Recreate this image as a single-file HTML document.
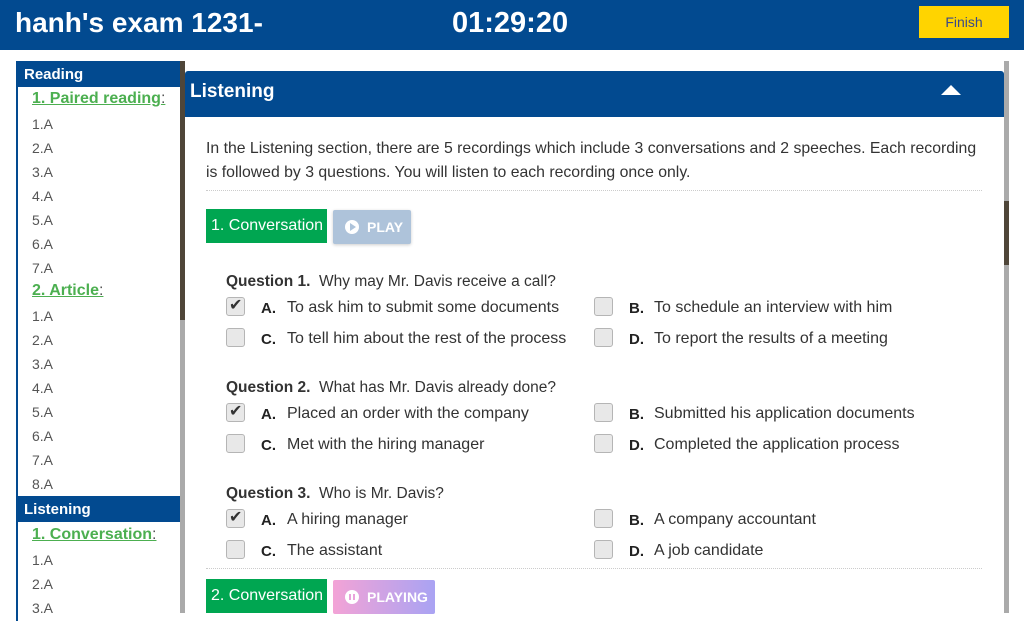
<!DOCTYPE html>
<html><head><meta charset="utf-8"><style>
*{margin:0;padding:0;box-sizing:border-box}
body{width:1024px;height:613px;overflow:hidden;background:#fff;font-family:"Liberation Sans",sans-serif;color:#333;position:relative}
.a{position:absolute;white-space:nowrap}
.top{left:0;top:0;width:1024px;height:50px;background:#024a90}
.side{left:16px;top:61px;width:165px;height:560px;border-left:2px solid #024a90;background:#fff}
.sh{position:absolute;left:0;width:163px;height:26px;background:#024a90;color:#fff;font-weight:bold;font-size:15px;padding:5px 0 0 6px}
.si{position:absolute;left:14px;font-size:14px;color:#555}
.sg{position:absolute;left:14px;font-size:16px;color:#4caf50;font-weight:bold;text-decoration:underline}
.cb{position:absolute;width:19px;height:19px;border:1px solid #b5b5b5;border-radius:3px;background:#e8e8e8}
.lt{position:absolute;font-size:15px;font-weight:bold;color:#222}
.tx{position:absolute;font-size:16px;color:#333;white-space:nowrap}
.q{position:absolute;left:226px;font-size:15.5px;color:#333;white-space:nowrap}
.conv{position:absolute;left:206px;height:34px;width:121px;background:#00a651;color:#fff;font-size:16px;padding:8px 0 0 5px}
.hr{position:absolute;left:206px;width:776px;border-top:1px dotted #ccc}
</style></head><body>
<div class="a top"></div>
<div class="a" style="left:15px;top:7px;color:#fff;font-size:28px;font-weight:bold">hanh's exam 1231-</div>
<div class="a" style="left:452px;top:7px;color:#fff;font-size:29px;font-weight:bold">01:29:20</div>
<div class="a" style="left:919px;top:6px;width:90px;height:32px;background:#ffd400;color:#3b4a8a;font-size:14px;text-align:center;padding-top:8px">Finish</div>

<div class="a side">
<div class="sh" style="top:0">Reading</div>
<div class="sg" style="top:29px">1. Paired reading<span style="color:#555;font-weight:normal;text-decoration:none">:</span></div>
<div class="si" style="top:55px">1.A</div><div class="si" style="top:79px">2.A</div><div class="si" style="top:103px">3.A</div><div class="si" style="top:127px">4.A</div><div class="si" style="top:151px">5.A</div><div class="si" style="top:175px">6.A</div><div class="si" style="top:199px">7.A</div>
<div class="sg" style="top:221px">2. Article<span style="color:#555;font-weight:normal;text-decoration:none">:</span></div>
<div class="si" style="top:247px">1.A</div><div class="si" style="top:271px">2.A</div><div class="si" style="top:295px">3.A</div><div class="si" style="top:319px">4.A</div><div class="si" style="top:343px">5.A</div><div class="si" style="top:367px">6.A</div><div class="si" style="top:391px">7.A</div><div class="si" style="top:415px">8.A</div>
<div class="sh" style="top:435px">Listening</div>
<div class="sg" style="top:465px">1. Conversation<span style="color:#555;font-weight:normal;text-decoration:none">:</span></div>
<div class="si" style="top:491px">1.A</div><div class="si" style="top:515px">2.A</div><div class="si" style="top:539px">3.A</div>
</div>
<div class="a" style="left:180px;top:61px;width:5px;height:552px;background:#aaa"></div>
<div class="a" style="left:180px;top:61px;width:5px;height:259px;background:#4f4639"></div>
<div class="a" style="left:1004px;top:61px;width:5px;height:552px;background:#aaa"></div>
<div class="a" style="left:1004px;top:201px;width:5px;height:64px;background:#4f4639"></div>

<div class="a" style="left:185px;top:71px;width:819px;height:46px;background:#024a90;border-radius:3px 3px 0 0"></div>
<div class="a" style="left:190px;top:81px;color:#fff;font-size:19px;font-weight:bold">Listening</div>
<div class="a" style="left:941px;top:85px;width:0;height:0;border-left:10px solid transparent;border-right:10px solid transparent;border-bottom:10px solid #fff"></div>

<div class="a" style="left:206px;top:137px;font-size:15.8px;line-height:24px;color:#333">In the Listening section, there are 5 recordings which include 3 conversations and 2 speeches. Each recording<br>is followed by 3 questions. You will listen to each recording once only.</div>
<div class="hr" style="top:190px"></div>

<div class="conv" style="top:209px">1. Conversation</div>
<div class="a" style="left:333px;top:210px;width:78px;height:34px;background:#aec3da;border-radius:2px;box-shadow:0 1px 3px rgba(0,0,0,.2);color:#fff;font-size:14px;font-weight:bold;padding:9px 0 0 12px"><span style="display:inline-block;width:14px;height:14px;border-radius:50%;background:#fff;vertical-align:-2px;margin-right:8px;position:relative"><span style="position:absolute;left:5px;top:3px;border-left:6px solid #aec3da;border-top:4px solid transparent;border-bottom:4px solid transparent"></span></span>PLAY</div>

<div class="q" style="top:273px"><b>Question 1.</b>&nbsp; Why may Mr. Davis receive a call?</div>
<div class="cb" style="left:226px;top:297px"></div><div class="a" style="left:229px;top:295px;font-size:16px;color:#333">✔</div>
<div class="lt" style="left:261px;top:300px">A.</div><div class="tx" style="left:287px;top:299px">To ask him to submit some documents</div>
<div class="cb" style="left:594px;top:297px"></div><div class="lt" style="left:629px;top:300px">B.</div><div class="tx" style="left:654px;top:299px">To schedule an interview with him</div>
<div class="cb" style="left:226px;top:328px"></div><div class="lt" style="left:261px;top:331px">C.</div><div class="tx" style="left:287px;top:330px">To tell him about the rest of the process</div>
<div class="cb" style="left:594px;top:328px"></div><div class="lt" style="left:629px;top:331px">D.</div><div class="tx" style="left:654px;top:330px">To report the results of a meeting</div>

<div class="q" style="top:379px"><b>Question 2.</b>&nbsp; What has Mr. Davis already done?</div>
<div class="cb" style="left:226px;top:403px"></div><div class="a" style="left:229px;top:401px;font-size:16px;color:#333">✔</div>
<div class="lt" style="left:261px;top:406px">A.</div><div class="tx" style="left:287px;top:405px">Placed an order with the company</div>
<div class="cb" style="left:594px;top:403px"></div><div class="lt" style="left:629px;top:406px">B.</div><div class="tx" style="left:654px;top:405px">Submitted his application documents</div>
<div class="cb" style="left:226px;top:434px"></div><div class="lt" style="left:261px;top:437px">C.</div><div class="tx" style="left:287px;top:436px">Met with the hiring manager</div>
<div class="cb" style="left:594px;top:434px"></div><div class="lt" style="left:629px;top:437px">D.</div><div class="tx" style="left:654px;top:436px">Completed the application process</div>

<div class="q" style="top:485px"><b>Question 3.</b>&nbsp; Who is Mr. Davis?</div>
<div class="cb" style="left:226px;top:509px"></div><div class="a" style="left:229px;top:507px;font-size:16px;color:#333">✔</div>
<div class="lt" style="left:261px;top:512px">A.</div><div class="tx" style="left:287px;top:511px">A hiring manager</div>
<div class="cb" style="left:594px;top:509px"></div><div class="lt" style="left:629px;top:512px">B.</div><div class="tx" style="left:654px;top:511px">A company accountant</div>
<div class="cb" style="left:226px;top:540px"></div><div class="lt" style="left:261px;top:543px">C.</div><div class="tx" style="left:287px;top:542px">The assistant</div>
<div class="cb" style="left:594px;top:540px"></div><div class="lt" style="left:629px;top:543px">D.</div><div class="tx" style="left:654px;top:542px">A job candidate</div>

<div class="hr" style="top:568px"></div>
<div class="conv" style="top:579px">2. Conversation</div>
<div class="a" style="left:333px;top:580px;width:102px;height:34px;background:linear-gradient(90deg,#f3a3d6,#a9a3f3);border-radius:2px;color:#fff;font-size:14px;font-weight:bold;padding:9px 0 0 12px"><span style="display:inline-block;width:14px;height:14px;border-radius:50%;background:#fff;vertical-align:-2px;margin-right:8px;position:relative"><span style="position:absolute;left:4px;top:4px;width:2px;height:6px;background:#eaa3dc"></span><span style="position:absolute;left:8px;top:4px;width:2px;height:6px;background:#eaa3dc"></span></span>PLAYING</div>
</body></html>
